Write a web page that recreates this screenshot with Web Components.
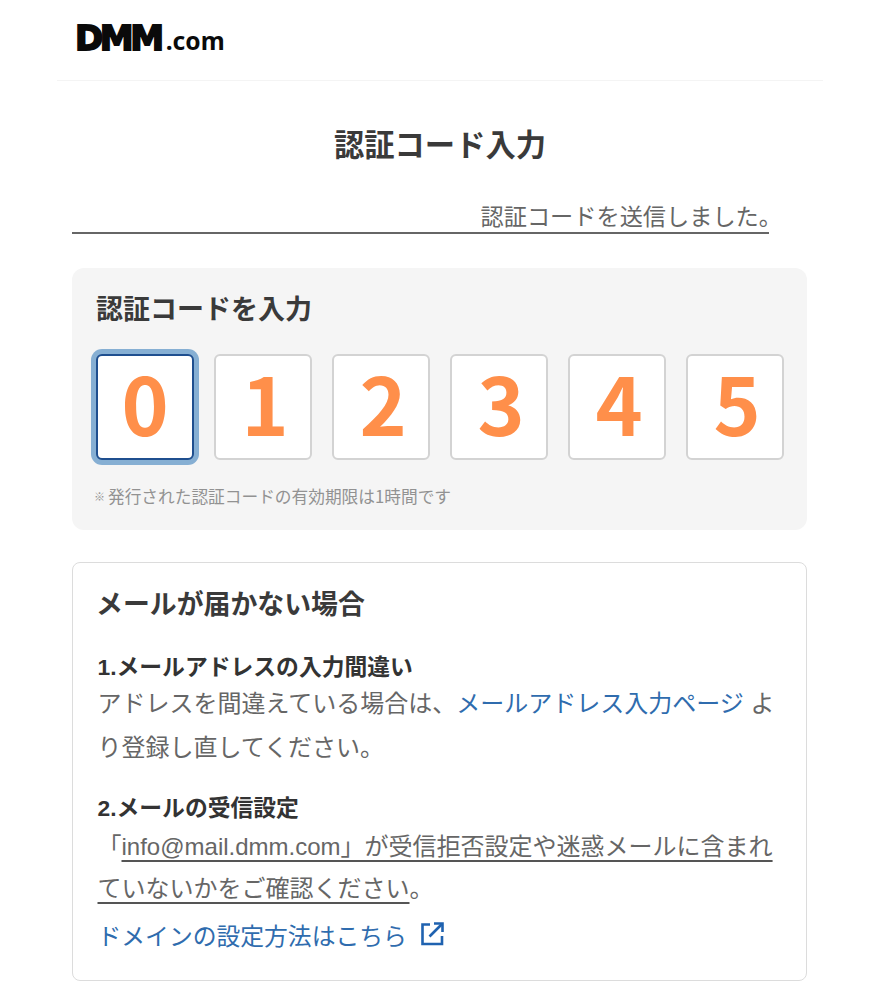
<!DOCTYPE html>
<html lang="ja">
<head>
<meta charset="utf-8">
<title>認証コード入力</title>
<style>
    html, body { margin: 0; background: #fff; }
    body { font-family: "Liberation Sans", "Noto Sans CJK JP", sans-serif; color: #333; }
    .body-text a { color: #2f6cae; }
    .body-text u { text-decoration-thickness: 2px; text-underline-offset: 5px; text-decoration-color: #555; }
</style>
</head>
<body>
<dmm-header></dmm-header>
<page-title>認証コード入力</page-title>
<sent-notice>認証コードを送信しました。</sent-notice>
<code-panel value="012345"></code-panel>
<help-card heading="メールが届かない場合">
    <help-section heading="1.メールアドレスの入力間違い">
        <div class="body-text">アドレスを間違えている場合は、<a>メールアドレス入力ページ</a> より登録し直してください。</div>
    </help-section>
    <help-section heading="2.メールの受信設定">
        <div class="body-text tight">「<u>info@mail.dmm.com」が受信拒否設定や迷惑メールに含まれていないかをご確認ください</u>。</div>
        <external-link>ドメインの設定方法はこちら</external-link>
    </help-section>
</help-card>

<script>
const components = [
    {
        name: 'dmm-header',
        class: class DmmHeader extends HTMLElement {
            constructor() {
                super();
                this.attachShadow({ mode: 'open' });
            }
            connectedCallback() {
                this.shadowRoot.innerHTML = `
                    <style>
                        :host {
                            display: flex;
                            align-items: center;
                            box-sizing: border-box;
                            height: 81px;
                            margin: 0 57px;
                            padding: 0 0 4px 18px;
                            border-bottom: 1px solid #f4f4f4;
                            color: #0a0a0a;
                        }
                        .logo { display: flex; align-items: baseline; font-family: "DejaVu Sans", sans-serif; font-weight: 700; }
                        .dmm {
                            font-size: 34px;
                            letter-spacing: -3.4px;
                            -webkit-text-stroke: 1.8px #0a0a0a;
                        }
                        .com { font-size: 24.6px; margin-left: 5px; font-family: "Noto Sans", sans-serif; }
                    </style>
                    <div class="logo"><span class="dmm">DMM</span><span class="com">.com</span></div>
                `;
            }
        }
    },
    {
        name: 'page-title',
        class: class PageTitle extends HTMLElement {
            constructor() {
                super();
                this.attachShadow({ mode: 'open' });
            }
            connectedCallback() {
                this.shadowRoot.innerHTML = `
                    <style>
                        :host {
                            display: block;
                            margin-top: 42px;
                            text-align: center;
                            font: 700 30.3px/40px "Noto Sans CJK JP", sans-serif;
                            color: #3a3a3a;
                        }
                    </style>
                    <slot></slot>
                `;
            }
        }
    },
    {
        name: 'sent-notice',
        class: class SentNotice extends HTMLElement {
            constructor() {
                super();
                this.attachShadow({ mode: 'open' });
            }
            connectedCallback() {
                this.shadowRoot.innerHTML = `
                    <style>
                        :host {
                            display: flex;
                            justify-content: flex-end;
                            box-sizing: border-box;
                            width: 697px;
                            height: 62px;
                            margin: 9px 0 0 72px;
                            border-bottom: 2px solid #666;
                            font: 400 23.2px/32px "Noto Sans CJK JP", sans-serif;
                            color: #666;
                        }
                        span { margin: 27px -13px 0 0; white-space: nowrap; }
                    </style>
                    <span><slot></slot></span>
                `;
            }
        }
    },
    {
        name: 'code-cell',
        class: class CodeCell extends HTMLElement {
            constructor() {
                super();
                this.attachShadow({ mode: 'open' });
            }
            connectedCallback() {
                this.shadowRoot.innerHTML = `
                    <style>
                        :host {
                            display: flex;
                            align-items: center;
                            justify-content: center;
                            box-sizing: border-box;
                            width: 98px;
                            height: 106px;
                            padding: 0 0 13px 4px;
                            background: #fff;
                            border: 2px solid #d3d3d3;
                            border-radius: 6px;
                            font: 700 80px/1 "Noto Sans CJK JP", sans-serif;
                            color: #ff8f4a;
                        }
                        :host([focused]) {
                            padding-left: 0;
                            border-color: #1f4f8f;
                            box-shadow: 0 0 0 5px #86afd3;
                        }
                    </style>
                    <slot></slot>
                `;
            }
        }
    },
    {
        name: 'code-panel',
        class: class CodePanel extends HTMLElement {
            constructor() {
                super();
                this.attachShadow({ mode: 'open' });
            }
            connectedCallback() {
                const value = this.getAttribute('value');
                const cells = [...value].map((d, i) => `<code-cell ${i === 0 ? 'focused' : ''}>${d}</code-cell>`).join('');
                this.shadowRoot.innerHTML = `
                    <style>
                        :host {
                            display: block;
                            box-sizing: border-box;
                            width: 735px;
                            height: 262px;
                            margin: 34px 0 0 72px;
                            padding: 22px 23px 0 24px;
                            background: #f5f5f5;
                            border-radius: 12px;
                        }
                        h2 { margin: 0; font: 700 27px/36px "Noto Sans CJK JP", sans-serif; color: #3a3a3a; }
                        .cells { display: flex; gap: 20px; margin-top: 28px; }
                        p { display: flex; align-items: center; gap: 3px; margin: 26px 0 0 -2px; font: 400 16.7px/20px "Noto Sans CJK JP", sans-serif; color: #929292; white-space: nowrap; }
                        small { font-size: 11px; font-weight: 700; }
                    </style>
                    <h2>認証コードを入力</h2>
                    <div class="cells">${cells}</div>
                    <p><small>※</small><span>発行された認証コードの有効期限は1時間です</span></p>
                `;
            }
        }
    },
    {
        name: 'help-card',
        class: class HelpCard extends HTMLElement {
            constructor() {
                super();
                this.attachShadow({ mode: 'open' });
            }
            connectedCallback() {
                this.shadowRoot.innerHTML = `
                    <style>
                        :host {
                            display: block;
                            box-sizing: border-box;
                            width: 735px;
                            height: 419px;
                            margin: 32px 0 0 72px;
                            padding: 20.5px 25px 0 24.5px;
                            border: 1.5px solid #dcdcdc;
                            border-radius: 8px;
                        }
                        h2 { margin: 0 0 30px -1.5px; font: 700 26.9px/38px "Noto Sans CJK JP", sans-serif; color: #3a3a3a; }
                    </style>
                    <h2>${this.getAttribute('heading')}</h2>
                    <slot></slot>
                `;
            }
        }
    },
    {
        name: 'help-section',
        class: class HelpSection extends HTMLElement {
            constructor() {
                super();
                this.attachShadow({ mode: 'open' });
            }
            connectedCallback() {
                this.shadowRoot.innerHTML = `
                    <style>
                        :host { display: block; margin-bottom: 23px; }
                        h3 { margin: 0; font: 700 22.8px/30px "Liberation Sans", "Noto Sans CJK JP", sans-serif; color: #333; }
                        ::slotted(.body-text) {
                            font: 400 24px/44px "Liberation Sans", "Noto Sans CJK JP", sans-serif;
                            color: #666;
                        }
                        ::slotted(.tight) { line-height: 42px; margin-top: 3px; }
                        ::slotted(external-link) { margin-top: 3px; }
                    </style>
                    <h3>${this.getAttribute('heading')}</h3>
                    <slot></slot>
                `;
            }
        }
    },
    {
        name: 'external-link',
        class: class ExternalLink extends HTMLElement {
            constructor() {
                super();
                this.attachShadow({ mode: 'open' });
            }
            connectedCallback() {
                this.shadowRoot.innerHTML = `
                    <style>
                        :host {
                            display: flex;
                            align-items: center;
                            gap: 12px;
                            font: 400 23.8px/43px "Noto Sans CJK JP", sans-serif;
                            color: #2f6cae;
                        }
                        svg { width: 26px; height: 26px; display: block; }
                    </style>
                    <slot></slot>
                    <svg viewBox="0 0 26 26" fill="none" stroke="#1f62b0" stroke-width="2.6">
                        <path d="M11 3.5H3.5V23H23V15"/>
                        <path d="M15 2.5H23.5V11"/>
                        <path d="M23 3L10.5 15.5"/>
                    </svg>
                `;
            }
        }
    }
];
components.forEach(component => {
    customElements.define(component.name, component.class);
});
</script>
</body>
</html>
